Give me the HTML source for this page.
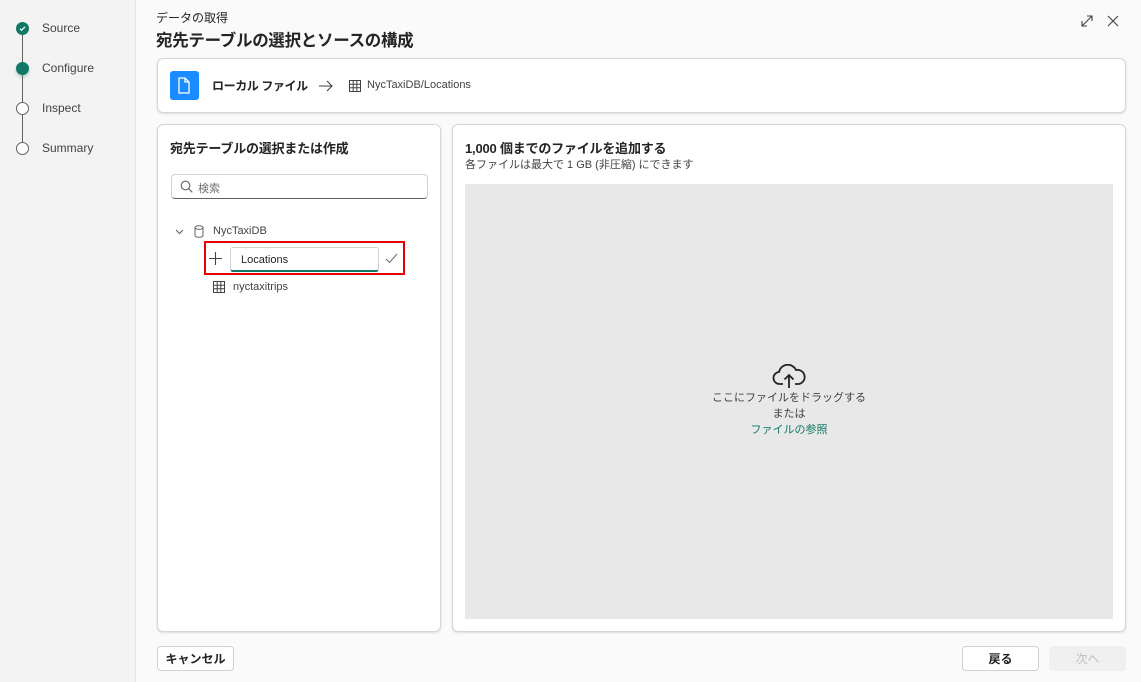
<!DOCTYPE html>
<html><head><meta charset="utf-8"><style>
*{box-sizing:border-box;margin:0;padding:0}
body{width:1141px;height:682px;overflow:hidden;background:#fafafa;font-family:"Liberation Sans","Noto Sans CJK JP",sans-serif;color:#242424;position:relative}
.abs{position:absolute}
.side{left:0;top:0;width:136px;height:682px;background:#f3f3f3;border-right:1px solid #e3e3e3}
.dot{width:13px;height:13px;border-radius:50%;border:1px solid #616161;background:#fff}
.lbl{font-size:12px;color:#424242}
.card{background:#fff;border:1px solid #d6d6d6;border-radius:6px;box-shadow:0 1px 2px rgba(0,0,0,.12)}
.btn{border:1px solid #d1d1d1;border-radius:4px;background:#fff;font-size:12px;font-weight:bold;text-align:center;line-height:24px}
</style></head><body>
<div class="abs side"></div>
<div class="abs" style="left:22px;top:34px;width:1px;height:108px;background:#616161"></div>
<div class="abs dot" style="left:16px;top:22px;background:#117865;border-color:#117865"></div>
<svg class="abs" style="left:18px;top:24px" width="9" height="9" viewBox="0 0 9 9"><path d="M2 4.7l1.6 1.6L7 2.8" stroke="#fff" fill="none" stroke-width="1.2"/></svg>
<div class="abs dot" style="left:16px;top:62px;background:#117865;border-color:#117865;box-shadow:0 2px 3px rgba(17,120,101,.3)"></div>
<div class="abs dot" style="left:16px;top:102px"></div>
<div class="abs dot" style="left:16px;top:142px"></div>
<div class="abs lbl" style="left:42px;top:21px">Source</div>
<div class="abs lbl" style="left:42px;top:61px">Configure</div>
<div class="abs lbl" style="left:42px;top:101px">Inspect</div>
<div class="abs lbl" style="left:42px;top:141px">Summary</div>

<div class="abs" style="left:156px;top:9px;font-size:12px">データの取得</div>
<div class="abs" style="left:156px;top:27px;font-size:16.5px;font-weight:bold;letter-spacing:-0.3px">宛先テーブルの選択とソースの構成</div>
<svg class="abs" style="left:1080px;top:14px" width="14" height="14" viewBox="0 0 14 14"><path d="M2 12L12 2M7 2h5v5M2 7v5h5" stroke="#424242" fill="none" stroke-width="1.1"/></svg>
<svg class="abs" style="left:1107px;top:15px" width="12" height="12" viewBox="0 0 12 12"><path d="M1 1l10 10M11 1L1 11" stroke="#424242" stroke-width="1.1"/></svg>

<div class="abs card" style="left:157px;top:58px;width:969px;height:55px"></div>
<div class="abs" style="left:170px;top:71px;width:29px;height:29px;background:#1a8cff;border-radius:3px"></div>
<svg class="abs" style="left:177px;top:77px" width="15" height="17" viewBox="0 0 15 17"><path d="M2 1h6l4 4v11H2z M8 1v4h4" stroke="#fff" fill="none" stroke-width="1.3"/></svg>
<div class="abs" style="left:212px;top:77px;font-size:12px;font-weight:bold;letter-spacing:-0.4px">ローカル ファイル</div>
<svg class="abs" style="left:318px;top:79px" width="16" height="14" viewBox="0 0 16 14"><path d="M1 7h13M9 2l5 5-5 5" stroke="#424242" fill="none" stroke-width="1.1"/></svg>
<svg class="abs" style="left:349px;top:80px" width="12" height="12" viewBox="0 0 12 12"><path d="M.5.5h11v11H.5zM.5 4.2h11M.5 7.8h11M4.2.5v11M7.8.5v11" stroke="#424242" fill="none"/></svg>
<div class="abs" style="left:367px;top:79px;font-size:11px;color:#424242">NycTaxiDB/Locations</div>

<div class="abs card" style="left:157px;top:124px;width:284px;height:508px"></div>
<div class="abs" style="left:170px;top:138px;font-size:13px;font-weight:bold;letter-spacing:-0.2px">宛先テーブルの選択または作成</div>
<div class="abs" style="left:171px;top:174px;width:257px;height:25px;border:1px solid #d1d1d1;border-bottom-color:#616161;border-radius:4px;background:#fff"></div>
<svg class="abs" style="left:180px;top:180px" width="13" height="13" viewBox="0 0 13 13"><circle cx="5.5" cy="5.5" r="4.3" stroke="#616161" fill="none" stroke-width="1.1"/><path d="M8.5 8.5l3.8 3.8" stroke="#616161" stroke-width="1.1"/></svg>
<div class="abs" style="left:198px;top:180px;font-size:11px;color:#707070">検索</div>
<svg class="abs" style="left:175px;top:229px" width="9" height="6" viewBox="0 0 9 6"><path d="M1 1l3.5 3.5L8 1" stroke="#616161" fill="none"/></svg>
<svg class="abs" style="left:194px;top:225px" width="10" height="13" viewBox="0 0 10 13"><ellipse cx="5" cy="2.5" rx="4" ry="1.8" stroke="#616161" fill="none"/><path d="M1 2.5v8c0 1 1.8 1.8 4 1.8s4-.8 4-1.8v-8" stroke="#616161" fill="none"/></svg>
<div class="abs" style="left:213px;top:225px;font-size:11px;color:#424242">NycTaxiDB</div>
<div class="abs" style="left:204px;top:241px;width:201px;height:34px;border:2px solid #e60000"></div>
<svg class="abs" style="left:209px;top:252px" width="13" height="13" viewBox="0 0 13 13"><path d="M6.5 0v13M0 6.5h13" stroke="#424242" stroke-width="1.1"/></svg>
<div class="abs" style="left:230px;top:247px;width:149px;height:25px;border:1px solid #d1d1d1;border-bottom:2px solid #117865;border-radius:3px;background:#fff;font-size:11px;padding:6px 0 0 10px">Locations</div>
<svg class="abs" style="left:385px;top:253px" width="13" height="11" viewBox="0 0 13 11"><path d="M1 6l3.5 3.5L12 1" stroke="#707070" fill="none" stroke-width="1.1"/></svg>
<svg class="abs" style="left:213px;top:281px" width="12" height="12" viewBox="0 0 12 12"><path d="M.5.5h11v11H.5zM.5 4.2h11M.5 7.8h11M4.2.5v11M7.8.5v11" stroke="#424242" fill="none"/></svg>
<div class="abs" style="left:233px;top:281px;font-size:11px;color:#424242">nyctaxitrips</div>

<div class="abs card" style="left:452px;top:124px;width:674px;height:508px"></div>
<div class="abs" style="left:465px;top:138px;font-size:13px;font-weight:bold;letter-spacing:-0.2px">1,000 個までのファイルを追加する</div>
<div class="abs" style="left:465px;top:156px;font-size:11px;color:#424242">各ファイルは最大で 1 GB (非圧縮) にできます</div>
<div class="abs" style="left:465px;top:184px;width:648px;height:435px;background:#e8e8e8"></div>
<svg class="abs" style="left:772px;top:364px" width="34" height="25" viewBox="0 0 34 25"><path d="M11 20H8a6 6 0 0 1-1-12 9 9 0 0 1 17-2 7 7 0 0 1 3 14h-4" stroke="#242424" fill="none" stroke-width="1.8"/><path d="M17 24V11M12.5 15.5L17 11l4.5 4.5" stroke="#242424" fill="none" stroke-width="1.8"/></svg>
<div class="abs" style="left:689px;top:390px;width:200px;text-align:center;font-size:11px;color:#424242;line-height:16px">ここにファイルをドラッグする<br>または<br><span style="color:#117865">ファイルの参照</span></div>

<div class="abs btn" style="left:157px;top:646px;width:77px;height:25px">キャンセル</div>
<div class="abs btn" style="left:962px;top:646px;width:77px;height:25px">戻る</div>
<div class="abs btn" style="left:1049px;top:646px;width:77px;height:25px;background:#f0f0f0;border-color:#f0f0f0;color:#bdbdbd;font-weight:normal">次へ</div>
</body></html>
